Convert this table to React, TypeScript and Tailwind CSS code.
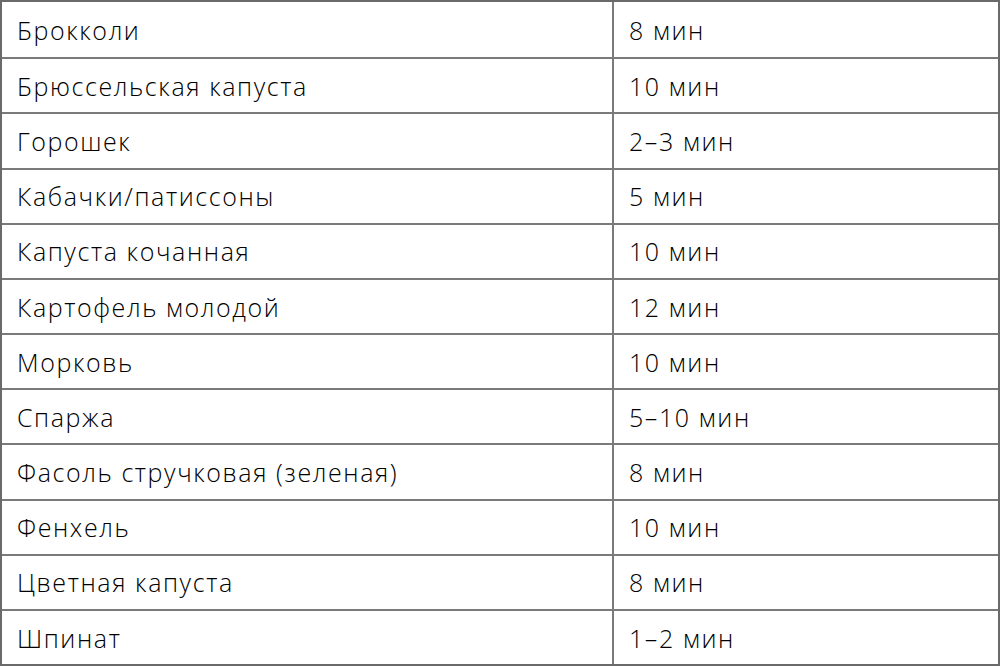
const rows: [string, string][] = [
  ["Брокколи", "8 мин"],
  ["Брюссельская капуста", "10 мин"],
  ["Горошек", "2–3 мин"],
  ["Кабачки/патиссоны", "5 мин"],
  ["Капуста кочанная", "10 мин"],
  ["Картофель молодой", "12 мин"],
  ["Морковь", "10 мин"],
  ["Спаржа", "5–10 мин"],
  ["Фасоль стручковая (зеленая)", "8 мин"],
  ["Фенхель", "10 мин"],
  ["Цветная капуста", "8 мин"],
  ["Шпинат", "1–2 мин"],
];

export default function App() {
  return (
    <div className="w-[1000px] h-[666px] bg-white">
      <div
        className="h-full grid grid-rows-12 border-2 border-[#6a6a6a] text-[25px] tracking-[1.6px] font-light text-black"
        style={{ fontFamily: "'Open Sans', 'Noto Sans', sans-serif" }}
      >
        {rows.map(([name, time], i) => (
          <div
            key={name}
            className={
              "grid grid-cols-[612px_1fr] " +
              (i > 0 ? "border-t-2 border-[#7a7a7a]" : "")
            }
          >
            <div className="flex items-center pl-[15px] pt-[2px] border-r-2 border-[#7a7a7a]">
              {name}
            </div>
            <div className="flex items-center pl-[15px] pt-[2px]">{time}</div>
          </div>
        ))}
      </div>
    </div>
  );
}
